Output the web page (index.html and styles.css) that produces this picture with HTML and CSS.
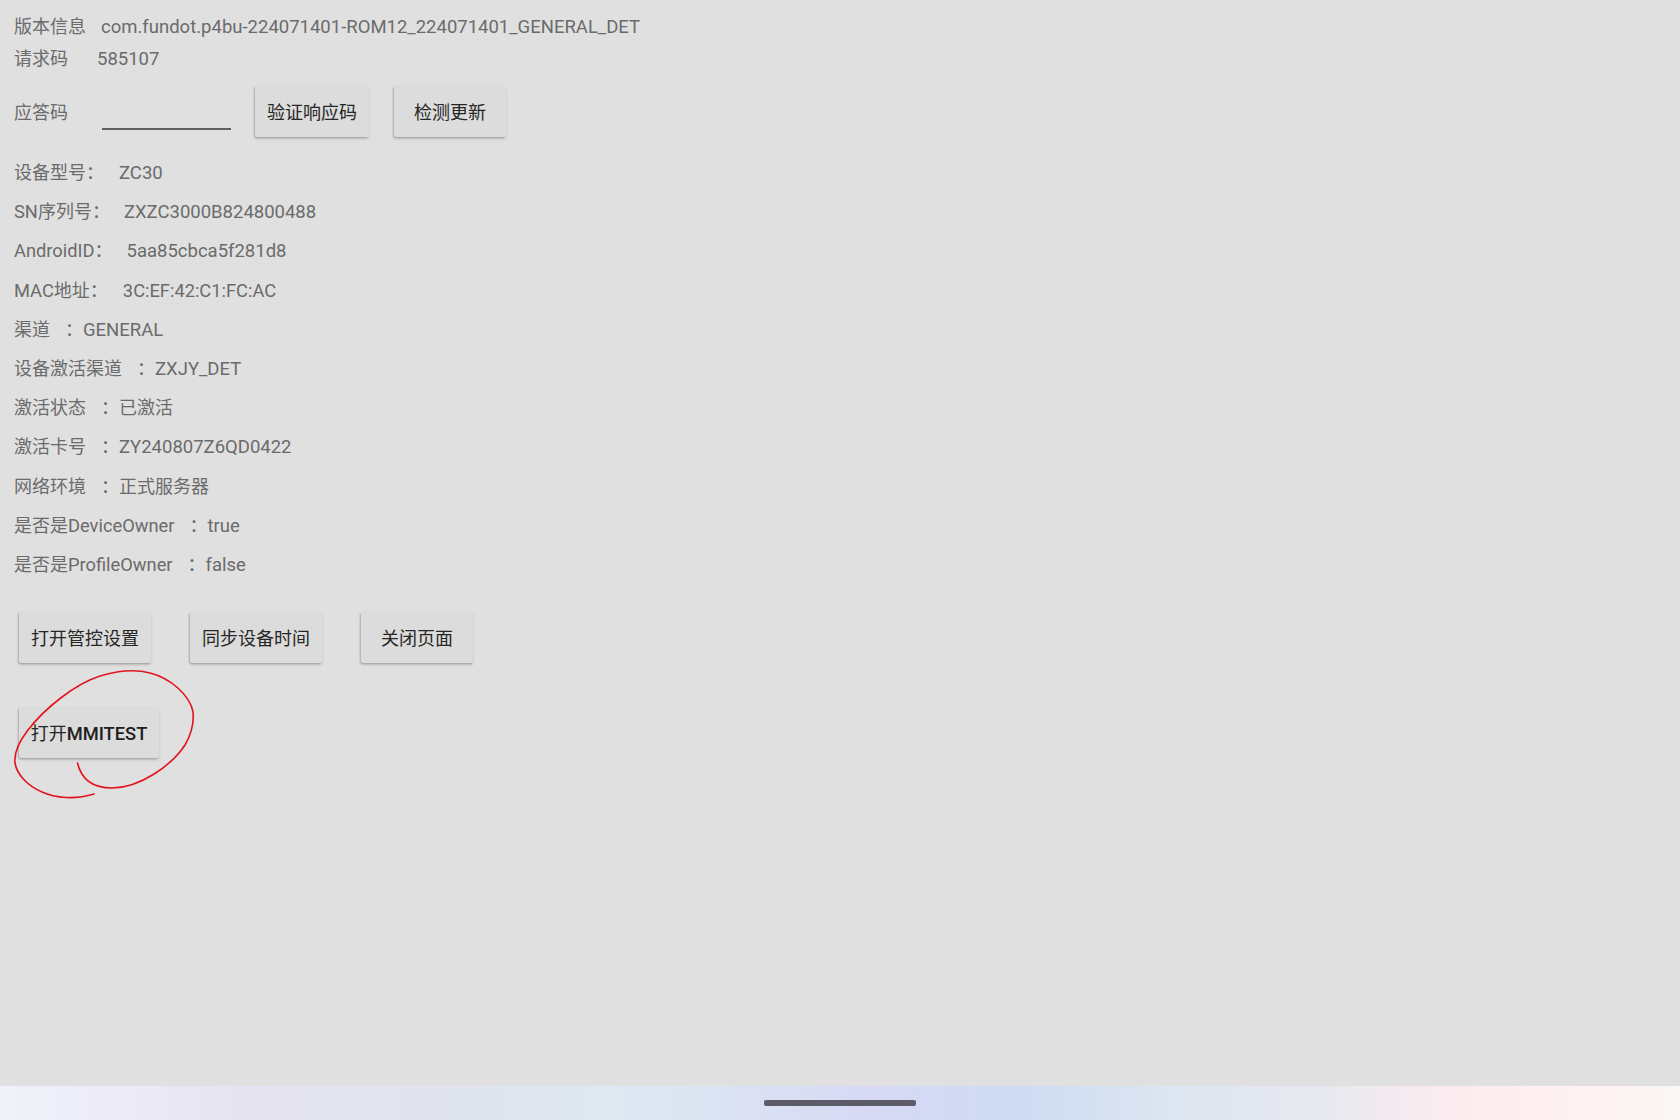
FILE: index.html
```html
<!DOCTYPE html>
<html lang="zh-CN">
<head>
<meta charset="utf-8">
<title>版本信息</title>
<link rel="stylesheet" href="styles.css">
</head>
<body>
<main class="screen">
  <section class="top">
    <div class="line line-version"><span class="label">版本信息</span><span class="lat val-version">com.fundot.p4bu-224071401-ROM12_224071401_GENERAL_DET</span></div>
    <div class="line line-request"><span class="label">请求码</span><span class="lat val-request">585107</span></div>
    <div class="answer">
      <span class="label label-answer">应答码</span>
      <span class="field"></span>
      <button class="btn btn-verify"><span class="btn-text">验证响应码</span></button>
      <button class="btn btn-update"><span class="btn-text">检测更新</span></button>
    </div>
  </section>
  <section class="info">
    <div class="row">设备型号：<span class="lat v v-short">ZC30</span></div>
    <div class="row"><span class="lat-l">SN</span>序列号：<span class="lat v">ZXZC3000B824800488</span></div>
    <div class="row"><span class="lat-l">AndroidID</span>：<span class="lat v">5aa85cbca5f281d8</span></div>
    <div class="row"><span class="lat-l">MAC</span>地址：<span class="lat-l v v-short">3C:EF:42:C1:FC:AC</span></div>
    <div class="row">渠道<span class="sep">：</span><span class="lat">GENERAL</span></div>
    <div class="row">设备激活渠道<span class="sep">：</span><span class="lat">ZXJY_DET</span></div>
    <div class="row">激活状态<span class="sep">：</span>已激活</div>
    <div class="row">激活卡号<span class="sep">：</span><span class="lat">ZY240807Z6QD0422</span></div>
    <div class="row">网络环境<span class="sep">：</span>正式服务器</div>
    <div class="row">是否是<span class="lat-l">DeviceOwner</span><span class="sep">：</span><span class="lat">true</span></div>
    <div class="row">是否是<span class="lat-l">ProfileOwner</span><span class="sep">：</span><span class="lat">false</span></div>
  </section>
  <section class="actions">
    <button class="btn btn-a1"><span class="btn-text">打开管控设置</span></button>
    <button class="btn btn-a2"><span class="btn-text">同步设备时间</span></button>
    <button class="btn btn-a3"><span class="btn-text">关闭页面</span></button>
  </section>
  <section class="actions2">
    <button class="btn btn-mmi"><span class="btn-text">打开<span class="lat-btn">MMITEST</span></span></button>
  </section>
  <svg class="scribble" width="240" height="180" viewBox="0 660 240 180" fill="none">
    <path d="M77.5 763C81 778 92 788 112 788C140 788 172 765 185 745C192 733 194 722 193 712C190 695 170 678 150 673C135 669 120 670 100 676C75 684 45 708 28 730C18 743 14 755 15 763C17 775 28 786 42 792C55 798 75 800 94 794" stroke="#e2141c" stroke-width="1.6" stroke-linecap="round"/>
  </svg>
  <div class="spacer"></div>
  <footer class="navbar"><span class="pill"></span></footer>
</main>
</body>
</html>
```

FILE: styles.css
```css
* { box-sizing: border-box; }
html, body { margin: 0; padding: 0; }
body {
  width: 1680px;
  height: 1120px;
  overflow: hidden;
  background: #e0e0e0;
  font-family: Roboto, "Noto Sans CJK SC", sans-serif;
  font-size: 18px;
  color: #6b6b6b;
}
.screen {
  position: relative;
  display: flex;
  flex-direction: column;
  width: 1680px;
  height: 1120px;
}
.lat { font-size: 18.5px; }
.lat-l { font-size: 18.3px; }
.top { padding: 11px 0 0 14px; }
.line { display: flex; align-items: baseline; height: 32px; line-height: 32px; }
.val-version { margin-left: 15px; }
.val-request { margin-left: 29px; }
.answer { display: flex; align-items: center; margin-top: 11px; height: 51px; }
.label-answer { padding-bottom: 2px; }
.field { width: 129px; height: 2px; margin: 42px 0 0 34px; background: #606060; align-self: flex-start; }
.btn {
  display: flex;
  align-items: center;
  justify-content: center;
  height: 51px;
  padding: 0 0 2px;
  border: 0;
  border-radius: 2px;
  background: #dbdcdb;
  color: #262626;
  font: inherit;
  box-shadow: -1px 1px 2px rgba(0,0,0,.2), 0 2px 3px rgba(0,0,0,.12);
}
.lat-btn { font-size: 18.3px; font-weight: 500; color: #202020; }
.btn-verify { width: 114px; margin-left: 24px; }
.btn-update { width: 112px; margin-left: 25px; }
.info { margin-top: 16px; padding-left: 14px; }
.row { height: 39.2px; line-height: 39.2px; white-space: nowrap; }
.v { margin-left: 14px; }
.v-short { margin-left: 15px; }
.sep { margin: 0 0 0 15px; }
.actions { display: flex; margin-top: 28px; padding-left: 19px; }
.btn-a1 { width: 132px; }
.btn-a2 { width: 132px; margin-left: 39px; }
.btn-a3 { width: 112px; margin-left: 39px; }
.actions2 { display: flex; margin-top: 44px; padding-left: 19px; }
.btn-mmi { width: 140px; }
.scribble { position: absolute; left: 0; top: 660px; }
.spacer { flex: 1; }
.navbar {
  position: relative;
  display: flex;
  justify-content: center;
  height: 34px;
  padding-top: 14px;
  background: linear-gradient(90deg, #f0f2fa 0%, #e7e4f2 14%, #dfe4ee 28%, #dfe9f2 36%, #dbe2f3 44%, #d7d9f4 52%, #cedcf2 61%, #dde6f1 70%, #e8e9f0 79%, #fdebef 87%, #fff0f2 92%, #fbf7f3 100%);
}
.pill { width: 152px; height: 6px; border-radius: 2px; background: #5b5c68; }
```
